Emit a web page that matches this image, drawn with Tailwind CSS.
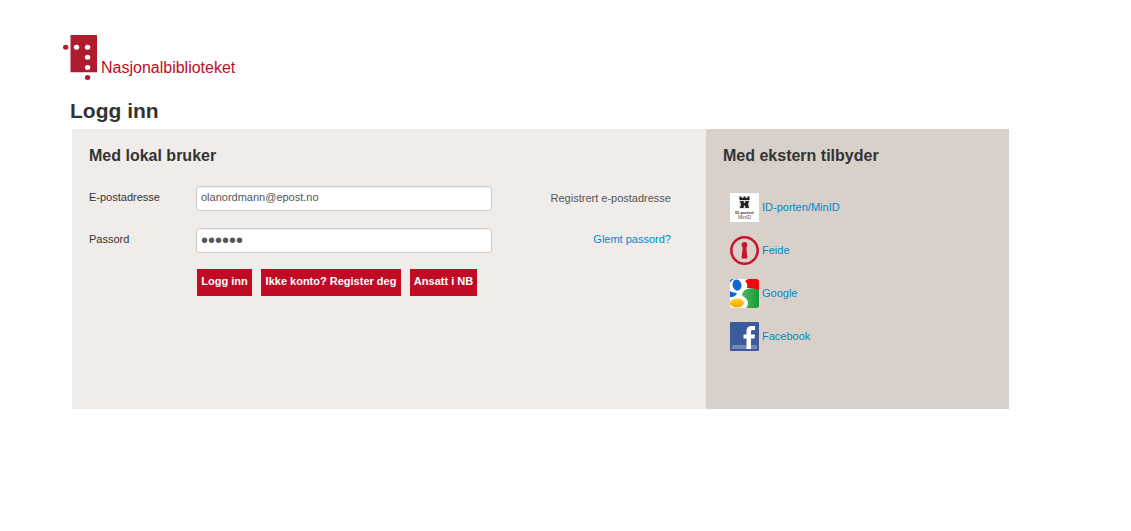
<!DOCTYPE html>
<html lang="no">
<head>
<meta charset="utf-8">
<meta name="viewport" content="width=device-width, initial-scale=1">
<title>Logg inn - Nasjonalbiblioteket</title>
<script src="https://cdn.jsdelivr.net/npm/@tailwindcss/browser@4"></script>
</head>
<body class="bg-white font-['Liberation_Sans',Arial,sans-serif] text-[11px] leading-5 text-[#333]">
<header class="flex items-end pt-[35px] pl-[63px]">
  <svg class="h-[45px] w-[34px]" viewBox="0 0 34 45" aria-hidden="true">
    <path fill="#b01c2e" d="M7.500 0H34V37.300H7.500z"/>
    <g fill="#b01c2e"><ellipse cx="2.700" cy="12.200" rx="2.700" ry="2.500"/><ellipse cx="24.600" cy="42.500" rx="2.700" ry="2.500"/></g>
    <g fill="#fff"><ellipse cx="13.500" cy="12.200" rx="2.700" ry="2.500"/><ellipse cx="24.600" cy="12.200" rx="2.700" ry="2.500"/><ellipse cx="24.600" cy="22.300" rx="2.700" ry="2.500"/><ellipse cx="24.600" cy="32.400" rx="2.700" ry="2.500"/></g>
  </svg>
  <span class="ml-1 pb-[2px] text-base leading-5 text-[#c10b25]">Nasjonalbiblioteket</span>
</header>
<main class="mr-[122px] ml-[72px] pt-4">
  <h1 class="-ml-[2px] pb-[3px] text-[21px] leading-[30px] font-bold">Logg inn</h1>
  <div class="flex min-h-[280px]">
    <section class="flex-1 bg-[#f0ecea] pt-[17px] pr-[35px] pl-[17px]">
      <h2 class="text-base leading-5 font-bold">Med lokal bruker</h2>
      <form>
        <div class="mt-5 flex items-center">
          <label for="email" class="w-[107px] pb-1">E-postadresse</label>
          <input id="email" type="email" value="olanordmann@epost.no" class="h-[25px] w-[296px] rounded-[3px] border border-[#ccc] bg-white px-1 pb-[3px] text-[#555] shadow-[inset_0_1px_1px_rgba(0,0,0,0.075)]">
          <span class="ml-auto pb-[2px] text-[#555]">Registrert e-postadresse</span>
        </div>
        <div class="mt-[17px] flex items-center">
          <label for="password" class="w-[107px] pb-1">Passord</label>
          <input id="password" type="password" value="passor" class="h-[25px] w-[296px] rounded-[3px] border border-[#ccc] bg-white px-1 pb-px text-[20px] text-[#555] shadow-[inset_0_1px_1px_rgba(0,0,0,0.075)]">
          <a href="#" class="ml-auto pb-1 text-[#08c]">Glemt passord?</a>
        </div>
        <div class="mt-4 ml-[108px] flex gap-[9px] font-bold whitespace-nowrap text-white">
          <button type="submit" class="h-[27px] min-w-[55px] bg-[#c10b25] pb-[3px]">Logg inn</button>
          <button type="button" class="h-[27px] min-w-[140px] bg-[#c10b25] pb-[3px]">Ikke konto? Register deg</button>
          <button type="button" class="h-[27px] min-w-[67px] bg-[#c10b25] pb-[3px]">Ansatt i NB</button>
        </div>
      </form>
    </section>
    <section class="w-[303px] bg-[#d8d0c9] pt-[17px] pl-[17px]">
      <h2 class="text-base leading-5 font-bold">Med ekstern tilbyder</h2>
      <ul class="mt-[27px] ml-[7px] flex flex-col items-start gap-[14px] text-[#08c]">
        <li><a href="#" class="flex items-center gap-[3px]">
          <svg class="size-[29px]" viewBox="0 0 29 29" aria-hidden="true">
            <path fill="#fff" d="M0 0h29v29H0z"/>
            <path fill="#ddd" d="M9 3.500h10.500v12H9z"/>
            <path fill="#222" d="M9.500 3.500h2v1.500h2V3.500h2V5h2V3.500h2V7H9.500zM10 8h3.500l.5 2h1l.5-2H19l-1 3.500 1 3.500h-3.500l-.5-2.500h-1l-.5 2.500H10l1-3.500z"/>
            <text x="14.500" y="21" text-anchor="middle" font-size="4" font-weight="bold" fill="#333">ID-porten/</text>
            <text x="14.500" y="26" text-anchor="middle" font-size="5" fill="#555">MinID</text>
          </svg><span class="pb-[2px]">ID-porten/MinID</span></a></li>
        <li><a href="#" class="flex items-center gap-[3px]">
          <svg class="size-[29px]" viewBox="0 0 29 29" aria-hidden="true">
            <circle cx="14.500" cy="14.500" r="13.200" fill="none" stroke="#c8142c" stroke-width="2.500"/>
            <circle cx="14.500" cy="8.800" r="2.900" fill="#c8142c"/>
            <path fill="#c8142c" d="M12.800 10h3.500l1 12.500h-5.700z"/>
          </svg><span class="pb-[2px]">Feide</span></a></li>
        <li><a href="#" class="flex items-center gap-[3px]">
          <svg class="size-[29px]" viewBox="0 0 29 29" aria-hidden="true">
            <defs>
              <clipPath id="tile"><rect width="29" height="29" rx="2.500"/></clipPath>
              <linearGradient id="green" x1="0" x2="1"><stop stop-color="#55b85b"/><stop offset="1" stop-color="#139b38"/></linearGradient>
              <linearGradient id="yellow" x2="0" y2="1"><stop stop-color="#ffd321"/><stop offset="1" stop-color="#f4a500"/></linearGradient>
            </defs>
            <g clip-path="url(#tile)">
              <path fill="#fff" d="M0 0h29v29H0z"/>
              <path fill="#1265d4" d="M0 0h4C2 1 1 2 0 4zM0 12c2 1 4 2 7 2-1 2-2 4-7 4z"/>
              <path fill="#e80c0c" d="M18 0h11v12c-3-2-7-3-12-3 1-3 0-5-2-7z"/>
              <path fill="url(#green)" d="M29 11c-5-2-11-2-14 0-2 2-3 3-3 5 1 2 6 3 6 8 0 2-1 4-2 5h13z"/>
              <ellipse cx="7" cy="6" rx="4.400" ry="5.600" fill="#1265d4" transform="rotate(-15 7 6)"/>
              <ellipse cx="7" cy="24" rx="7" ry="4.500" fill="url(#yellow)" transform="rotate(-5 7 24)"/>
            </g>
          </svg><span class="pb-[2px]">Google</span></a></li>
        <li><a href="#" class="flex items-center gap-[3px]">
          <svg class="size-[29px]" viewBox="0 0 29 29" aria-hidden="true">
            <rect width="29" height="29" rx="1" fill="#3b5b9b"/>
            <path fill="#7288b8" d="M2 23h25v4H2z"/>
            <path fill="#fff" d="M16.500 27V16.500h-3V12.500h3V9.500c0-4 2-5.500 5.500-5.500h3v4h-2c-2 0-2 .7-2 2v2.500h4l-.5 4H21V27z"/>
          </svg><span class="pb-[2px]">Facebook</span></a></li>
      </ul>
    </section>
  </div>
</main>
</body>
</html>
